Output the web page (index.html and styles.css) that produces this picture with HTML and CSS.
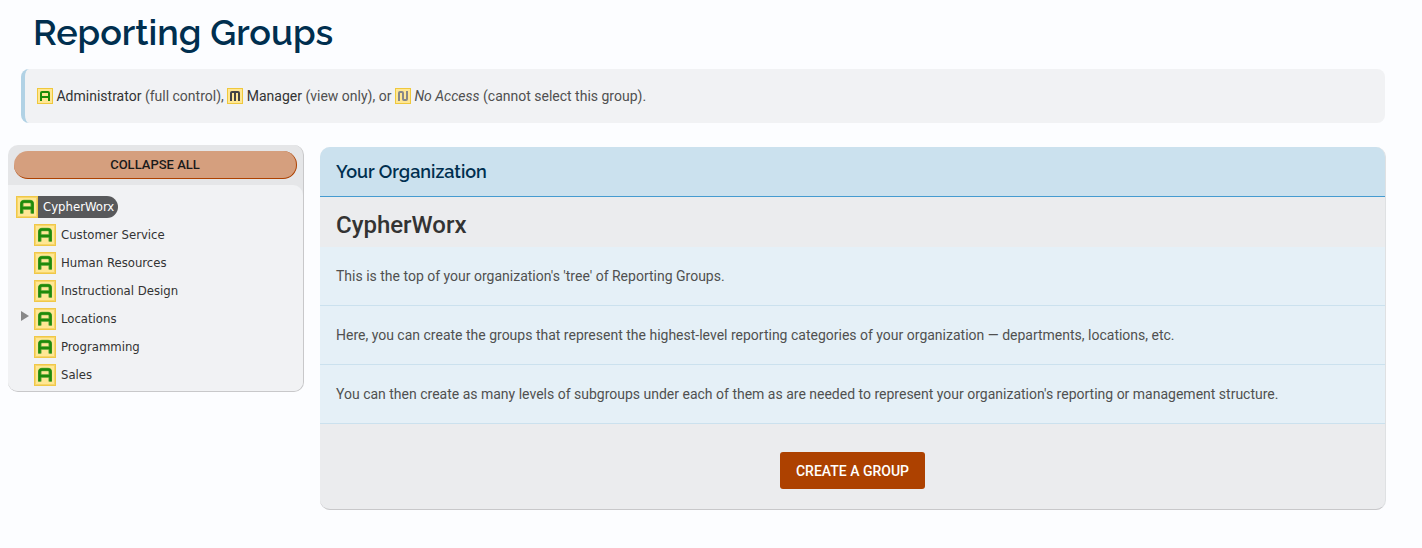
FILE: index.html
```
<!DOCTYPE html>
<html lang="en">
<head>
    <meta charset="UTF-8">
    <meta name="viewport" content="width=device-width, initial-scale=1.0">
    <title>Reporting Groups</title>
    <link rel="stylesheet" href="styles.css">
</head>
<body>

    <!-- access level icons -->
    <svg class="icon-defs" aria-hidden="true">
        <symbol id="icon-admin" viewBox="0 0 22 22">
            <rect width="22" height="22" fill="#f0c848"/>
            <rect x="1" y="1" width="20" height="20" fill="#f7d568"/>
            <rect x="2" y="2" width="18" height="18" fill="#ffe794"/>
            <path d="M5.8 17.5V8Q5.8 5.5 8 5.5H14Q16.2 5.5 16.2 8V17.5M5.8 12H16.2" fill="none" stroke="#72b04a" stroke-width="3.6"/>
            <path d="M5.5 17.5V8Q5.5 5.5 8 5.5H14Q16.5 5.5 16.5 8V17.5M5.5 12H16.5" fill="none" stroke="#1f8a0a" stroke-width="2.5"/>
        </symbol>
        <symbol id="icon-admin-small" viewBox="0 0 16 16">
            <rect x=".5" y=".5" width="15" height="15" fill="#ffe794" stroke="#efc83c"/>
            <path d="M4 13V5Q4 4 5 4H11Q12 4 12 5V13M4 9H12" fill="none" stroke="#1f8a0a" stroke-width="2"/>
        </symbol>
        <symbol id="icon-manager" viewBox="0 0 16 16">
            <rect x=".5" y=".5" width="15" height="15" fill="#ffe794" stroke="#efc83c"/>
            <path d="M4 13V5Q4 4 5 4H11Q12 4 12 5V13M8 4V13" fill="none" stroke="#444" stroke-width="2"/>
        </symbol>
        <symbol id="icon-none" viewBox="0 0 16 16">
            <rect x=".5" y=".5" width="15" height="15" fill="#ffe794" stroke="#efc83c"/>
            <path d="M4 13V5Q4 4 5 4H7Q8 4 8 5V11Q8 12 9 12H11Q12 12 12 11V3" fill="none" stroke="#888" stroke-width="2"/>
        </symbol>
    </svg>

    <header>
        <h1>Reporting Groups</h1>
        <p class="legend">
            <svg class="icon-small" aria-hidden="true"><use href="#icon-admin-small"/></svg>
            <strong>Administrator</strong> (full control),
            <svg class="icon-small" aria-hidden="true"><use href="#icon-manager"/></svg>
            <strong>Manager</strong> (view only), or
            <svg class="icon-small" aria-hidden="true"><use href="#icon-none"/></svg>
            <em>No Access</em> (cannot select this group).
        </p>
    </header>

    <div class="columns">
        <nav class="sidebar" aria-label="Reporting groups">
            <div class="sidebar-top">
                <button type="button" class="collapse">Collapse All</button>
            </div>
            <div class="tree">
                <a href="#" class="node root"><svg class="icon" aria-hidden="true"><use href="#icon-admin"/></svg><span>CypherWorx</span></a>
                <ul>
                    <li><a href="#" class="node"><svg class="icon" aria-hidden="true"><use href="#icon-admin"/></svg><span>Customer Service</span></a></li>
                    <li><a href="#" class="node"><svg class="icon" aria-hidden="true"><use href="#icon-admin"/></svg><span>Human Resources</span></a></li>
                    <li><a href="#" class="node"><svg class="icon" aria-hidden="true"><use href="#icon-admin"/></svg><span>Instructional Design</span></a></li>
                    <li>
                        <button type="button" class="expand" aria-label="Expand Locations"><svg viewBox="0 0 8 10" width="8" height="10"><path d="M0 0L8 5L0 10Z" fill="#888"/></svg></button>
                        <a href="#" class="node"><svg class="icon" aria-hidden="true"><use href="#icon-admin"/></svg><span>Locations</span></a>
                    </li>
                    <li><a href="#" class="node"><svg class="icon" aria-hidden="true"><use href="#icon-admin"/></svg><span>Programming</span></a></li>
                    <li><a href="#" class="node"><svg class="icon" aria-hidden="true"><use href="#icon-admin"/></svg><span>Sales</span></a></li>
                </ul>
            </div>
        </nav>

        <main class="panel">
            <h2>Your Organization</h2>
            <h3>CypherWorx</h3>
            <p>This is the top of your organization's 'tree' of Reporting Groups.</p>
            <p>Here, you can create the groups that represent the highest-level reporting categories of your organization — departments, locations, etc.</p>
            <p>You can then create as many levels of subgroups under each of them as are needed to represent your organization's reporting or management structure.</p>
            <div class="actions">
                <button type="button" class="create">Create a Group</button>
            </div>
        </main>
    </div>

</body>
</html>
```
FILE: styles.css
```
* {
    box-sizing: border-box;
}

body {
    margin: 0;
    background-color: #fcfdff;
    color: #505050;
    font-family: Roboto, sans-serif;
    font-size: 14px;
    line-height: 22px;
}

h1, h2, h3, p, ul {
    margin: 0;
    padding: 0;
}

button {
    font-family: inherit;
    cursor: pointer;
}

.icon-defs {
    display: none;
}

header {
    padding: 8px 37px 0 21px;
}

h1 {
    padding-left: 12px;
    font-family: Raleway, Lato, sans-serif;
    font-size: 36px;
    font-weight: 600;
    line-height: 48px;
    color: #002f4f;
}

.legend {
    margin-top: 13px;
    padding: 16px 12px;
    background-color: #f1f2f4;
    border-left: 4px solid #b1d2e5;
    border-radius: 8px;
}

.legend strong {
    font-weight: 400;
    color: #333;
}

.icon-small {
    width: 16px;
    height: 16px;
    vertical-align: -3px;
}

.columns {
    display: flex;
    align-items: flex-start;
    gap: 16px;
    padding: 22px 36px 0 8px;
}

.sidebar {
    flex: 0 0 296px;
    background-color: #e5e6e8;
    border-right: 1px solid #c8c8ca;
    border-bottom: 1px solid #c8c8ca;
    border-radius: 10px;
    overflow: hidden;
}

.sidebar-top {
    padding: 6px;
}

.collapse {
    display: block;
    width: 100%;
    height: 28px;
    padding: 0;
    background-color: #d59f7e;
    border: 0 solid #ad4100;
    border-width: 0 1px 1px 0;
    border-radius: 14px;
    color: #1a1a1a;
    font-size: 13px;
    font-weight: 500;
    text-transform: uppercase;
}

.tree {
    padding: 11px 8px 5px;
    background-color: #f1f2f4;
    border-top-right-radius: 10px;
    font-family: Tahoma, "DejaVu Sans Condensed", "Noto Sans", sans-serif;
    font-size: 13px;
}

.tree ul {
    list-style: none;
}

.tree li {
    display: flex;
    justify-content: flex-start;
    margin-top: 6px;
    padding-left: 18px;
}

.node {
    display: inline-flex;
    gap: 5px;
    color: #333;
    text-decoration: none;
}

.icon {
    width: 22px;
    height: 22px;
}

.root {
    display: flex;
    width: fit-content;
    padding-right: 4px;
    background-color: #58595b;
    border-radius: 0 11px 11px 0;
    color: #fff;
}

.expand {
    display: flex;
    width: 13px;
    height: 16px;
    margin-left: -13px;
    padding: 3px 0;
    background: none;
    border: 0;
}

.panel {
    flex: 1;
    margin-top: 2px;
    background-color: #ebecee;
    border-right: 1px solid #dfe1e3;
    border-bottom: 1px solid #c8c8ca;
    border-radius: 10px;
    overflow: hidden;
}

.panel h2 {
    padding: 13px 16px 12px;
    background-color: #cbe1ee;
    border-bottom: 1px solid #459bd0;
    font-family: Raleway, Lato, sans-serif;
    font-size: 18px;
    font-weight: 600;
    line-height: 24px;
    color: #002f4f;
}

.panel h3 {
    padding: 14px 16px 8px;
    font-size: 24px;
    font-weight: 500;
    line-height: 28px;
    color: #333;
}

.panel p {
    padding: 18px 16px;
    background-color: #e5f0f7;
    border-bottom: 1px solid #cbe1ee;
}

.actions {
    padding: 28px 16px 20px;
    text-align: center;
}

.create {
    height: 37px;
    padding: 0 16px;
    background-color: #ad4100;
    border: 0;
    border-radius: 3px;
    color: #fff;
    font-size: 14px;
    font-weight: 500;
    text-transform: uppercase;
    vertical-align: top;
}
```
